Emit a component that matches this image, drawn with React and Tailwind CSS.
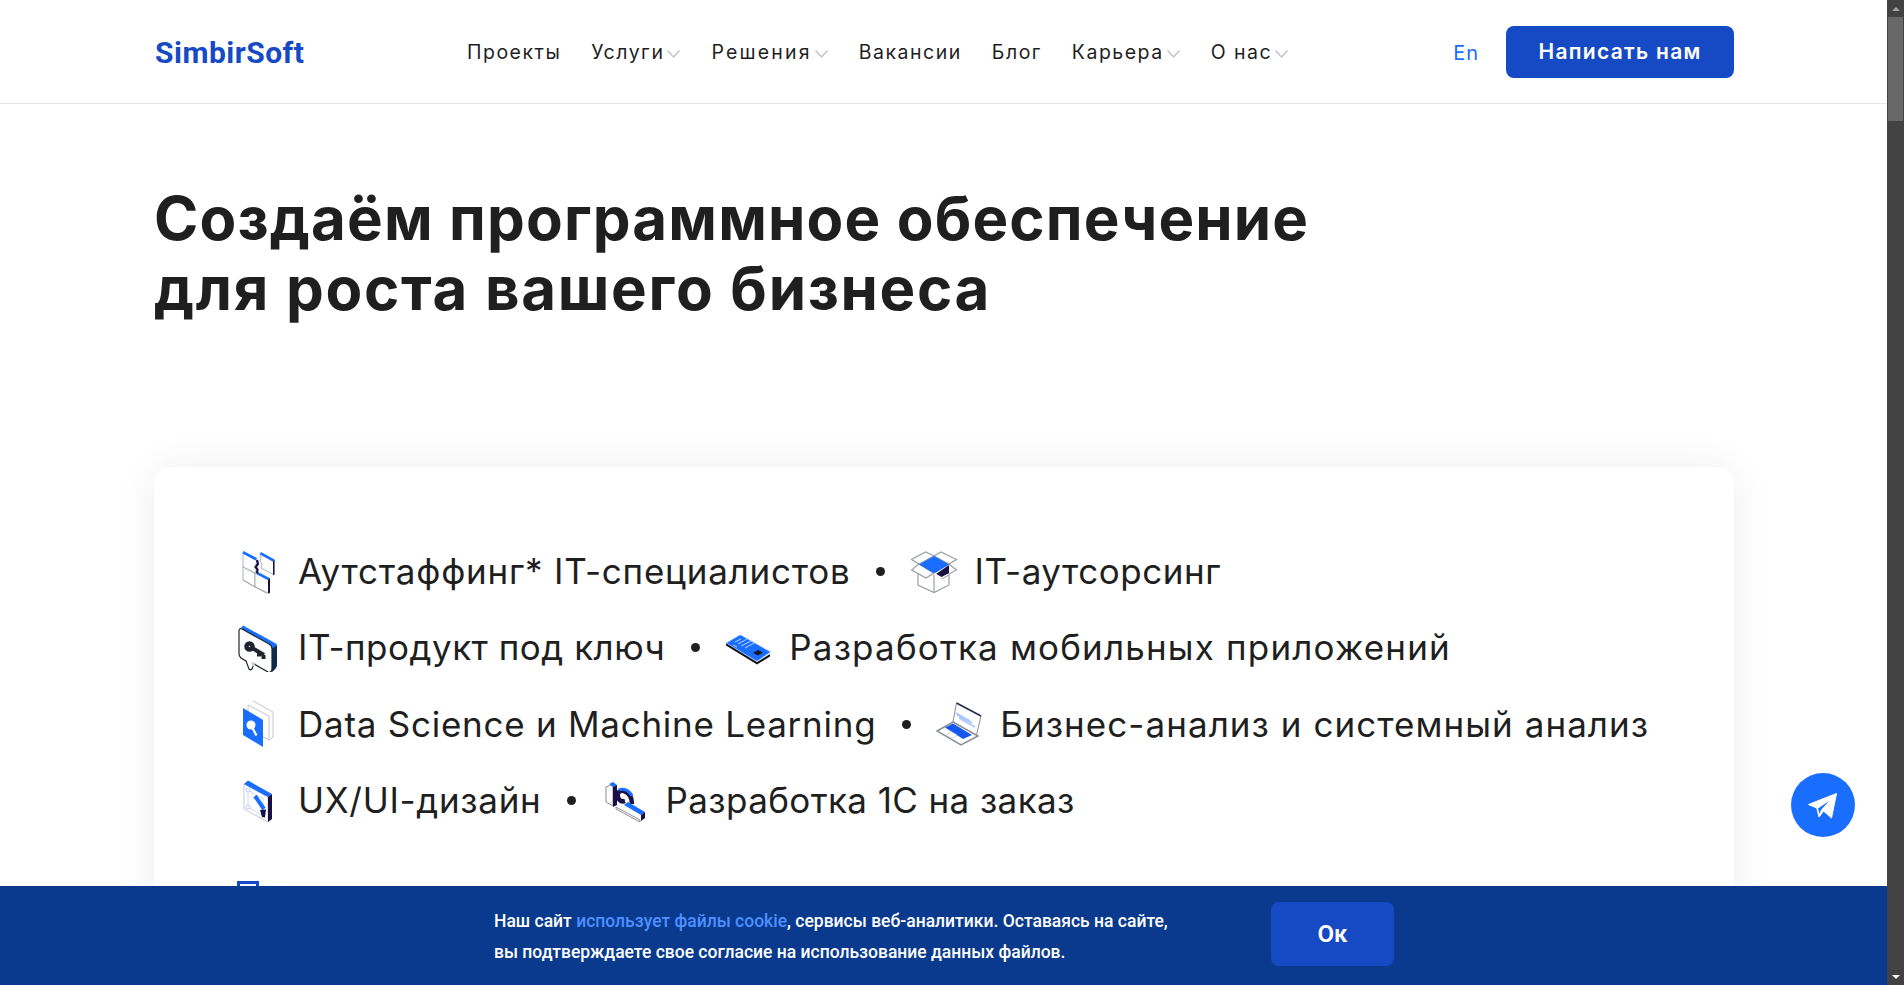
const navItems = [
    { label: 'Проекты' },
    { label: 'Услуги', hasMenu: true },
    { label: 'Решения', hasMenu: true, tracking: 'tracking-[2.200px]' },
    { label: 'Вакансии' },
    { label: 'Блог' },
    { label: 'Карьера', hasMenu: true },
    { label: 'О нас', hasMenu: true },
];

const BLUE = '#1a6eff';
const DARK = '#1a1046';
const GRAY = '#9a9ea6';

const Chevron = () => (
    <svg width="15" height="10" viewBox="0 0 15 10" fill="none" className="mt-[2px]">
        <path d="M1.500 1.500l6 6.500 6-6.500" stroke="#c2c2c2" strokeWidth="1.500" />
    </svg>
);

const PuzzleIcon = () => (
    <svg width="48" height="48" viewBox="0 0 48 48" fill="none">
        <path d="M9 5l14 7-1 5 1 4-2 5-12-6z" fill="#fff" stroke={GRAY} strokeWidth=".800" />
        <path d="M26 6l14 7v15l-13-7 1-4-2-3 1-3z" fill="#fff" stroke={GRAY} strokeWidth=".800" />
        <path d="M9 20l12 6.500v13.500L9 33z" fill="#fff" stroke={GRAY} strokeWidth=".800" />
        <path d="M21 26.500l14.500 5v15L21 40z" fill="#fff" stroke={GRAY} strokeWidth=".800" />
        <path d="M9 33l24 13.500" stroke={GRAY} strokeWidth=".800" />
        <path d="M9.500 4l13.500 7-1.500 2.500L8.500 6.500z" fill={BLUE} />
        <path d="M27 5l13.500 7.500-1 2.500-13.500-7.500z" fill={BLUE} />
        <path d="M39 14.500v13.500l1.500-.5V12.500z" fill={DARK} />
        <path d="M24 25l11.500 6-1 2.500L23 27.500z" fill={BLUE} />
        <path d="M34 33v13.500l2-1V31z" fill={DARK} />
        <path d="M23 13l1 4-2.500 3 2 2.500-.5 4" stroke={DARK} strokeWidth="2.200" />
    </svg>
);

const BoxIcon = () => (
    <svg width="48" height="48" viewBox="0 0 48 48" fill="none">
        <path d="M7 27v11l16 7.500 15-7.500V27" fill="#fff" stroke={GRAY} strokeWidth="1.200" />
        <path d="M23 26v19.500" stroke={GRAY} strokeWidth="1.200" />
        <path d="M8 17L.5 12.500 14.500 5 23 9zM38 17l7.500-4.500L30 5l-7 4z" fill="#fff" stroke={GRAY} strokeWidth="1.200" />
        <path d="M8 17L.5 23l14.500 8 8-5zM38 17l7.500 6-15 8-7.500-5z" fill="#fff" stroke={GRAY} strokeWidth="1.200" />
        <path d="M8 17.500L23 9l15 8.500-15 9z" fill={BLUE} />
        <path d="M25 27l13-9v9l-8 4z" fill={DARK} />
        <path d="M23 26.500L30.500 31 38 27" stroke="#fff" strokeWidth="1.500" />
        <path d="M30.500 32l7.500-4" stroke={GRAY} strokeWidth="1" />
    </svg>
);

const KeyIcon = () => (
    <svg width="48" height="48" viewBox="0 0 48 48" fill="none">
        <path d="M9 2l31 17c2 1 3 2 3 4v18c0 2-2 5-5 7L5 29z" fill="#0c2a52" />
        <path d="M7 4l2-2.500 31 17c2 1 3 2 3 3l-5 3z" fill={BLUE} />
        <path d="M8 5l27 15c2 1 3 3 3 5v20c0 2-2 4-4 3L20 40l-2 5c-1 1-2 1-3 0l-3-8-5-3c-1-1-2-2-2-4V7c0-2 1-3 3-2z" fill="#fff" stroke="#20252d" strokeWidth="1.200" />
        <path d="M17 38l5 1-3 4z" fill="#c9ccd2" />
        <circle cx="15.500" cy="22.500" r="3" stroke="#20252d" strokeWidth="4.500" />
        <path d="M19 24.500l11 6.500M25 28.500v4M29.500 31v4" stroke="#20252d" strokeWidth="4" />
    </svg>
);

const PhoneIcon = () => (
    <svg width="48" height="48" viewBox="0 0 48 48" fill="none">
        <path d="M1 19l31 19 13-8v2.500L32 40.500 1 21.500z" fill="#14161c" />
        <path d="M1.500 19L14 11.500c1-.5 1.500-.5 2.500 0L45.500 28 33 36.500c-1 .5-1.500.5-2.500 0z" fill={BLUE} stroke="#9cc0ff" strokeWidth=".500" />
        <path d="M10 18l6-3M13 20l9-5M16 22l10-5M20 24l9-5M8 21l4 2" stroke="#bcd6ff" strokeWidth="1" />
        <path d="M28 29l5-3 5 2.500-5 3z" fill="#16182a" />
    </svg>
);

const DataIcon = () => (
    <svg width="48" height="48" viewBox="0 0 48 48" fill="none">
        <path d="M19 1l20 11v25l-4 3" fill="#fff" stroke="#c4c6cb" strokeWidth="1" />
        <path d="M14 5l21 11v24L14 29z" fill="#fff" stroke="#c4c6cb" strokeWidth="1" />
        <path d="M9 8l20 12v27L9 35z" fill={BLUE} />
        <circle cx="17" cy="25" r="4.500" fill="#fff" />
        <path d="M18.500 28l4 7.500" stroke="#fff" strokeWidth="2.200" />
    </svg>
);

const LaptopIcon = () => (
    <svg width="48" height="48" viewBox="0 0 48 48" fill="none">
        <path d="M20.500 3L45 16l-4.500 19L17 22z" fill="#fff" stroke="#8a8e96" strokeWidth="1" />
        <path d="M20.500 3L45 16" stroke="#23304f" strokeWidth="1.600" />
        <path d="M20 13l14 8M21 15l15 8M23 18l16 9" stroke="#a8c8ff" strokeWidth="1.500" />
        <path d="M1 31l16-9 25 14-17 9z" fill="#fff" stroke="#8a8e96" strokeWidth="1.500" />
        <path d="M9 27.500l8-4 19 11.500-9 4z" fill="#1258f0" />
        <path d="M10 35l5-3.500 6 3.500-5 3.500z" fill="#fff" stroke="#c4c6cb" strokeWidth=".800" />
    </svg>
);

const UxIcon = () => (
    <svg width="48" height="48" viewBox="0 0 48 48" fill="none">
        <path d="M10 7l24 13v25L10 32z" fill="#fff" stroke="#c8cad0" strokeWidth="1" />
        <path d="M10 7l4-3.500L38 17l-4 3z" fill={BLUE} />
        <path d="M34 20l4-3v25l-4 3z" fill={DARK} />
        <path d="M14 13l15 9v17l-15-9z" stroke="#b9d3ff" strokeWidth=".800" />
        <circle cx="14" cy="13" r="2" fill="#fff" stroke="#9fc2ff" strokeWidth=".800" />
        <circle cx="14" cy="30" r="2" fill="#fff" stroke="#9fc2ff" strokeWidth=".800" />
        <path d="M21 19l9 13" stroke={BLUE} strokeWidth="4" />
        <path d="M26 33l6-.5-1 8-3-.5z" fill={DARK} />
    </svg>
);

const OneCIcon = () => (
    <svg width="48" height="48" viewBox="0 0 48 48" fill="none">
        <path d="M4 10l5-2 2 1v20l-7-4z" fill="#fff" stroke="#8a8e96" strokeWidth="1" />
        <path d="M7 7l4-2 4 3-4 2z" fill={BLUE} />
        <path d="M11 10l4-2v20l-4 2z" fill={DARK} />
        <path d="M14 30l24 13v2L14 32z" fill="#fff" stroke="#8a8e96" strokeWidth="1" />
        <path d="M30 27c0-6-2-11-8-13-5-1-7 2-6 6 1 4 4 5 7 4" stroke={DARK} strokeWidth="4.500" />
        <path d="M17 13c5-2 11 1 13 6" stroke={BLUE} strokeWidth="3" />
        <path d="M26 25l17 10-4 3-17-10z" fill={BLUE} />
        <path d="M39 38l4-3v6l-4 3z" fill={DARK} />
    </svg>
);

const NextIcon = () => (
    <svg width="48" height="48" viewBox="0 0 48 48" fill="none">
        <rect x="4.500" y="1.500" width="19" height="40" fill="#fff" stroke="#1249c9" strokeWidth="3" />
    </svg>
);

// tracking differs per label: Inter stands in for the wider original font
const services = [
    [
        { icon: PuzzleIcon, label: 'Аутстаффинг* IT-специалистов', tracking: 'tracking-[0.77px]' },
        { icon: BoxIcon, label: 'IT-аутсорсинг', tracking: 'tracking-[0.53px]' },
    ],
    [
        { icon: KeyIcon, label: 'IT-продукт под ключ', tracking: 'tracking-[0.5px]' },
        { icon: PhoneIcon, label: 'Разработка мобильных приложений', tracking: 'tracking-[1.17px]' },
    ],
    [
        { icon: DataIcon, label: 'Data Science и Machine Learning', tracking: 'tracking-[0.74px]' },
        { icon: LaptopIcon, label: 'Бизнес-анализ и системный анализ', tracking: 'tracking-[1.05px]' },
    ],
    [
        { icon: UxIcon, label: 'UX/UI-дизайн', tracking: 'tracking-[0.7px]' },
        { icon: OneCIcon, label: 'Разработка 1С на заказ', tracking: 'tracking-[0.4px]' },
    ],
];

function Header() {
    return (
        <header className="h-[104px] shrink-0 border-b border-[#e6e6e6] pl-[155px] pr-[153px] flex items-center justify-between">
            <a className="w-[312px] pt-[2px] text-[30px] leading-none font-bold text-[#164ac4] font-['Roboto',sans-serif] tracking-[0.5px]">SimbirSoft</a>
            <nav className="flex-1 pt-[2px] flex items-center gap-[30px] text-[19.500px] text-[#1f1f1f] tracking-[1.500px]">
                {navItems.map(item => (
                    <a key={item.label} className={`flex items-center gap-[2px] ${item.tracking || ''}`}>
                        {item.label}
                        {item.hasMenu && <Chevron />}
                    </a>
                ))}
            </nav>
            <a className="pt-[2px] text-[20px] tracking-[1px] text-[#1a6eff] mr-[27px]">En</a>
            <button className="w-[228px] h-[52px] rounded-lg bg-[#164ac4] text-white text-[21px] font-semibold tracking-[1.300px]">Написать нам</button>
        </header>
    );
}

function ServiceRow({ items }) {
    return (
        <div className="flex items-center h-12">
            {items.map((item, i) => (
                <div key={item.label} className="flex items-center">
                    {i > 0 && <span className="w-[9px] h-[9px] rounded-full bg-[#1f1f1f] mx-[25.500px]" />}
                    <span className="w-12 h-12 mr-4 shrink-0"><item.icon /></span>
                    <span className={`text-[35px] leading-none text-[#1f1f1f] whitespace-nowrap ${item.tracking}`}>{item.label}</span>
                </div>
            ))}
        </div>
    );
}

export default function App() {
    return (
        <div className="relative h-screen overflow-hidden flex bg-white font-['Inter',sans-serif]">
            <div className="flex-1 min-w-0 flex flex-col">
                <Header />

                <main className="flex-1 pl-[154px] pr-[153px] overflow-hidden">
                    <h1 className="mt-[79px] text-[60px] leading-[70px] font-bold text-[#1f1f1f] tracking-[1.150px]">
                        Создаём программное обеспечение<br /><span className="tracking-[1.700px]">для роста вашего бизнеса</span>
                    </h1>

                    <section className="mt-[144px] h-[600px] rounded-2xl bg-white shadow-[0_0_40px_rgba(0,0,0,0.07)] pt-[80px] pl-[80px]">
                        <div className="flex flex-col gap-[28.5px]">
                            {services.map((row, i) => <ServiceRow key={i} items={row} />)}
                        </div>
                        <div className="mt-[56px] w-12 h-12"><NextIcon /></div>
                    </section>
                </main>
            </div>

            {/* scrollbar */}
            <div className="w-[17px] shrink-0 bg-[#424242] flex flex-col items-center">
                <div className="h-[17px] flex items-center justify-center">
                    <span className="w-0 h-0 border-x-4 border-x-transparent border-b-4 border-b-[#a3a3a3]" />
                </div>
                <div className="w-[15px] h-[104px] bg-[#686868]" />
                <div className="flex-1" />
                <div className="h-[17px] flex items-center justify-center">
                    <span className="w-0 h-0 border-x-4 border-x-transparent border-t-4 border-t-white" />
                </div>
            </div>

            {/* telegram */}
            <a className="absolute left-[1791px] top-[773px] w-16 h-16 rounded-full bg-[#1a6eff] flex items-center justify-center">
                <svg width="64" height="64" viewBox="0 0 64 64">
                    <path d="M45.500 20.500L17.500 31.500 25.800 35 28 44l4.500-6 8 7z" fill="#fff" stroke="#fff" strokeWidth="1" strokeLinejoin="round" />
                    <path d="M27 35.500l11-7.500-8 9-1.500 4z" fill="#1a6eff" />
                </svg>
            </a>

            {/* cookie banner */}
            <div className="absolute left-0 right-[17px] bottom-0 h-[99px] bg-[#093a8d] flex items-center pl-[494px] font-['Roboto',sans-serif]">
                <p className="w-[777px] mt-[2px] text-[17.500px] leading-[31px] font-medium text-white">
                    Наш сайт <a className="text-[#4d90ff]">использует файлы cookie</a>, сервисы веб-аналитики. Оставаясь на сайте,<br />
                    вы подтверждаете свое согласие на использование данных файлов.
                </p>
                <button className="w-[123px] h-16 mb-[3px] rounded-lg bg-[#164ac4] text-white text-[24px] font-semibold">Ок</button>
            </div>
        </div>
    );
}
